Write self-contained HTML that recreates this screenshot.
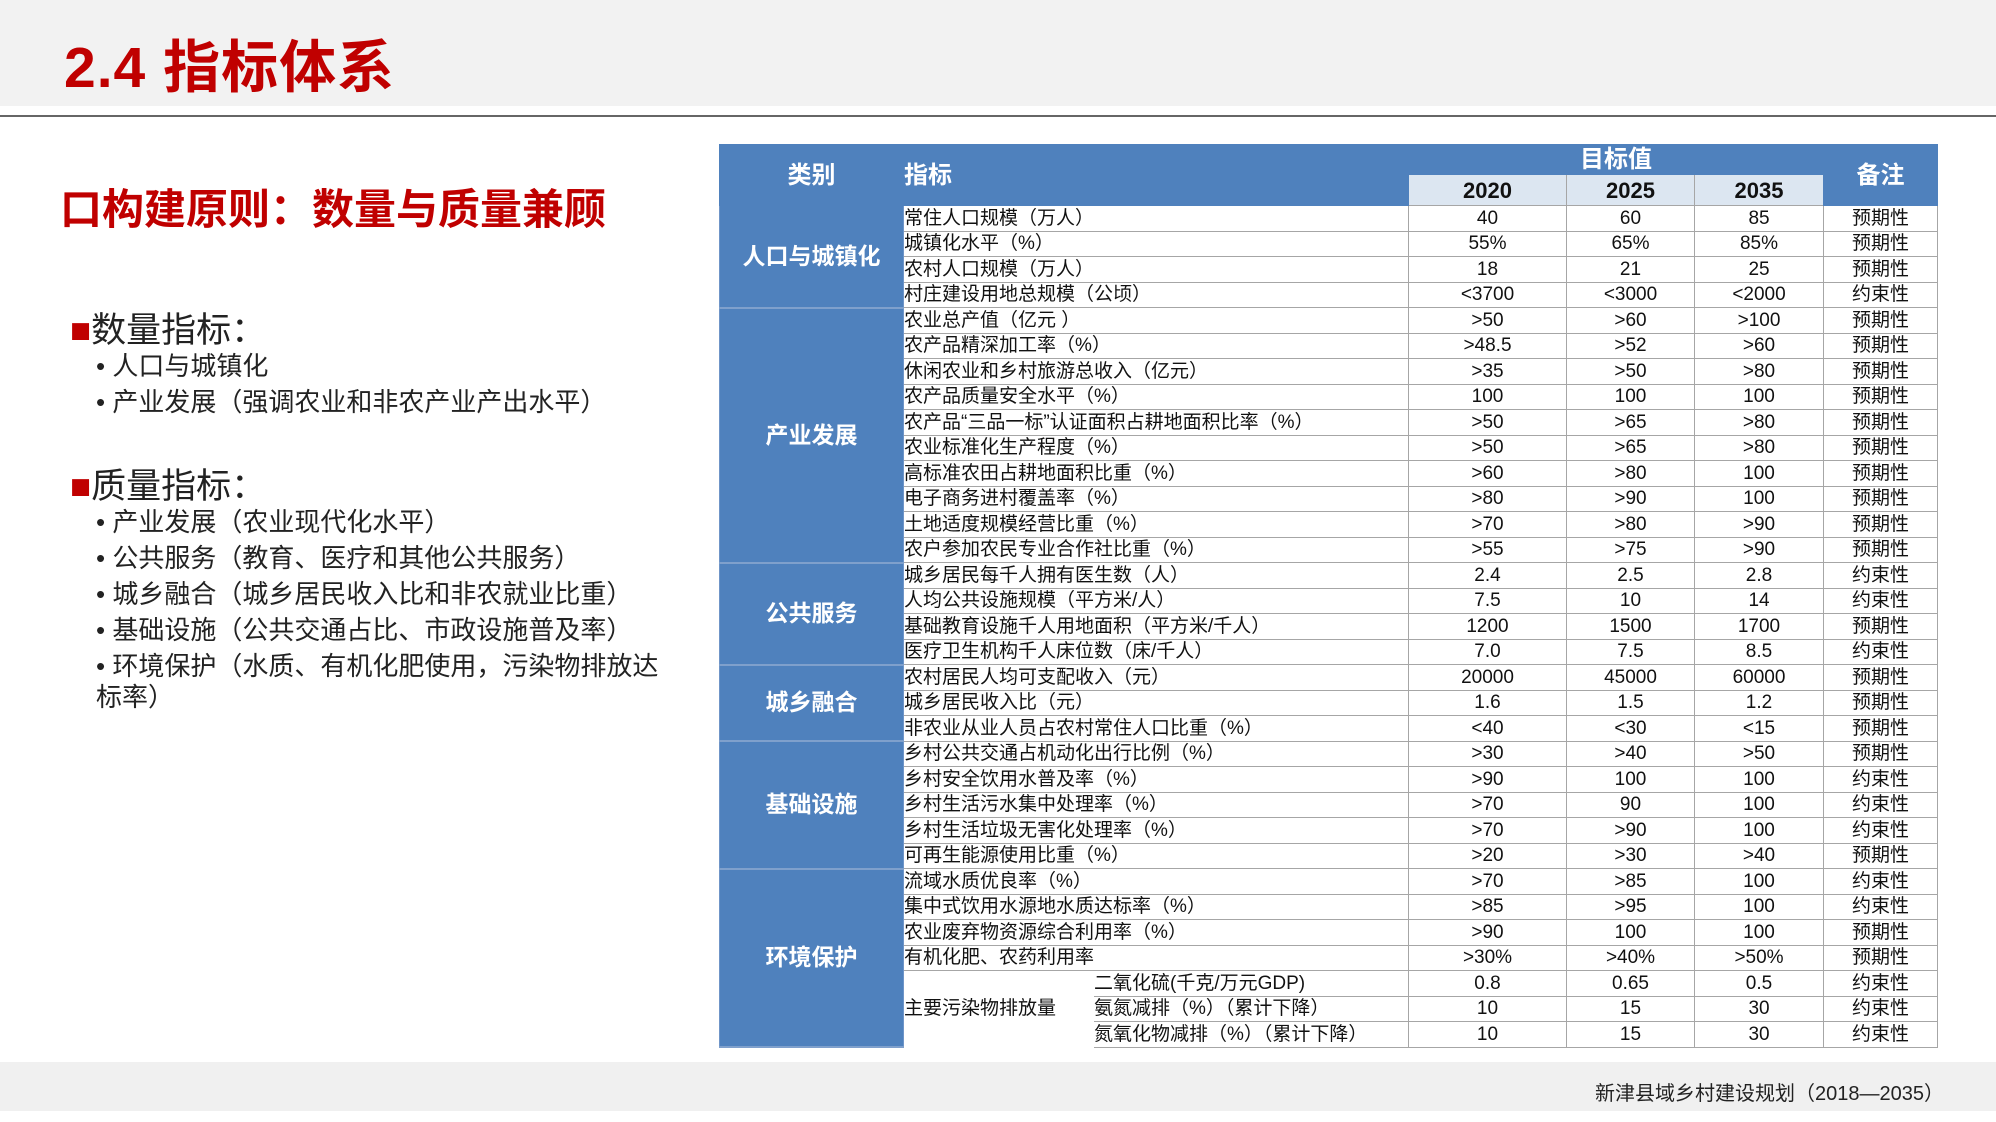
<!DOCTYPE html>
<html><head><meta charset="utf-8"><style>
*{margin:0;padding:0;box-sizing:border-box}
body{width:1996px;height:1122px;background:#fff;position:relative;overflow:hidden;font-family:"Liberation Sans","Noto Sans CJK SC",sans-serif}
.top{position:absolute;left:0;top:0;width:1996px;height:106px;background:#f2f2f2}
.line{position:absolute;left:0;top:115px;width:1996px;height:2px;background:#666}
.title{position:absolute;left:64px;top:22px;font-size:57px;font-weight:bold;color:#c00000;letter-spacing:1px}
.sub{position:absolute;left:60px;top:176px;font-size:42px;font-weight:bold;color:#c00000}
.h2{position:absolute;left:70px;font-size:35px;color:#222}
.h2 b{color:#c00000;font-weight:normal}
.li{position:absolute;left:96px;font-size:26px;color:#222;line-height:31px;width:580px}
table{position:absolute;left:719px;top:144px;width:1218px;border-collapse:collapse;table-layout:fixed;font-size:19px;color:#111}
td{border:1px solid #a6a6a6;height:25.5px;padding:0;white-space:nowrap;overflow:hidden;line-height:23px}
td.c{text-align:center}
.hd{background:#4f81bd;color:#fff;font-weight:bold;font-size:24px;border-color:#4f81bd}
.yr{background:#dce6f1;color:#111;font-weight:bold;font-size:22px;text-align:center;border-color:#a6a6a6}
.cat{background:#4f81bd;color:#fff;font-weight:bold;font-size:23px;text-align:center;border:1px solid #6f95c8;border-bottom:2px solid #7fa0cc}
.foot{position:absolute;left:0;top:1062px;width:1996px;height:49px;background:#f0f0f0}
.ft{position:absolute;right:52px;top:1077px;font-size:20px;color:#222}
</style></head><body>
<div class="top"></div><div class="line"></div>
<div class="title">2.4 指标体系</div>
<div class="sub">口构建原则：数量与质量兼顾</div>
<div class="h2" style="top:302px"><b>■</b>数量指标：</div>
<div class="li" style="top:351px">• 人口与城镇化</div>
<div class="li" style="top:387px">• 产业发展（强调农业和非农产业产出水平）</div>
<div class="h2" style="top:458px"><b>■</b>质量指标：</div>
<div class="li" style="top:507px">• 产业发展（农业现代化水平）</div>
<div class="li" style="top:543px">• 公共服务（教育、医疗和其他公共服务）</div>
<div class="li" style="top:579px">• 城乡融合（城乡居民收入比和非农就业比重）</div>
<div class="li" style="top:615px">• 基础设施（公共交通占比、市政设施普及率）</div>
<div class="li" style="top:651px">• 环境保护（水质、有机化肥使用，污染物排放达标率）</div>
<table>
<colgroup><col style="width:184px"><col style="width:190px"><col style="width:315px"><col style="width:158px"><col style="width:128px"><col style="width:129px"><col style="width:114px"></colgroup>
<tr style="height:30px"><td class="hd c" rowspan="2">类别</td><td class="hd" colspan="2" rowspan="2">指标</td><td class="hd c" colspan="3">目标值</td><td class="hd c" rowspan="2">备注</td></tr>
<tr style="height:31px"><td class="yr">2020</td><td class="yr">2025</td><td class="yr">2035</td></tr>
<tr><td class="cat" rowspan="4">人口与城镇化</td><td colspan="2">常住人口规模（万人）</td><td class="c">40</td><td class="c">60</td><td class="c">85</td><td class="c">预期性</td></tr>
<tr><td colspan="2">城镇化水平（%）</td><td class="c">55%</td><td class="c">65%</td><td class="c">85%</td><td class="c">预期性</td></tr>
<tr><td colspan="2">农村人口规模（万人）</td><td class="c">18</td><td class="c">21</td><td class="c">25</td><td class="c">预期性</td></tr>
<tr><td colspan="2">村庄建设用地总规模（公顷）</td><td class="c">&lt;3700</td><td class="c">&lt;3000</td><td class="c">&lt;2000</td><td class="c">约束性</td></tr>
<tr><td class="cat" rowspan="10">产业发展</td><td colspan="2">农业总产值（亿元 ）</td><td class="c">&gt;50</td><td class="c">&gt;60</td><td class="c">&gt;100</td><td class="c">预期性</td></tr>
<tr><td colspan="2">农产品精深加工率（%）</td><td class="c">&gt;48.5</td><td class="c">&gt;52</td><td class="c">&gt;60</td><td class="c">预期性</td></tr>
<tr><td colspan="2">休闲农业和乡村旅游总收入（亿元）</td><td class="c">&gt;35</td><td class="c">&gt;50</td><td class="c">&gt;80</td><td class="c">预期性</td></tr>
<tr><td colspan="2">农产品质量安全水平（%）</td><td class="c">100</td><td class="c">100</td><td class="c">100</td><td class="c">预期性</td></tr>
<tr><td colspan="2">农产品“三品一标”认证面积占耕地面积比率（%）</td><td class="c">&gt;50</td><td class="c">&gt;65</td><td class="c">&gt;80</td><td class="c">预期性</td></tr>
<tr><td colspan="2">农业标准化生产程度（%）</td><td class="c">&gt;50</td><td class="c">&gt;65</td><td class="c">&gt;80</td><td class="c">预期性</td></tr>
<tr><td colspan="2">高标准农田占耕地面积比重（%）</td><td class="c">&gt;60</td><td class="c">&gt;80</td><td class="c">100</td><td class="c">预期性</td></tr>
<tr><td colspan="2">电子商务进村覆盖率（%）</td><td class="c">&gt;80</td><td class="c">&gt;90</td><td class="c">100</td><td class="c">预期性</td></tr>
<tr><td colspan="2">土地适度规模经营比重（%）</td><td class="c">&gt;70</td><td class="c">&gt;80</td><td class="c">&gt;90</td><td class="c">预期性</td></tr>
<tr><td colspan="2">农户参加农民专业合作社比重（%）</td><td class="c">&gt;55</td><td class="c">&gt;75</td><td class="c">&gt;90</td><td class="c">预期性</td></tr>
<tr><td class="cat" rowspan="4">公共服务</td><td colspan="2">城乡居民每千人拥有医生数（人）</td><td class="c">2.4</td><td class="c">2.5</td><td class="c">2.8</td><td class="c">约束性</td></tr>
<tr><td colspan="2">人均公共设施规模（平方米/人）</td><td class="c">7.5</td><td class="c">10</td><td class="c">14</td><td class="c">约束性</td></tr>
<tr><td colspan="2">基础教育设施千人用地面积（平方米/千人）</td><td class="c">1200</td><td class="c">1500</td><td class="c">1700</td><td class="c">预期性</td></tr>
<tr><td colspan="2">医疗卫生机构千人床位数（床/千人）</td><td class="c">7.0</td><td class="c">7.5</td><td class="c">8.5</td><td class="c">约束性</td></tr>
<tr><td class="cat" rowspan="3">城乡融合</td><td colspan="2">农村居民人均可支配收入（元）</td><td class="c">20000</td><td class="c">45000</td><td class="c">60000</td><td class="c">预期性</td></tr>
<tr><td colspan="2">城乡居民收入比（元）</td><td class="c">1.6</td><td class="c">1.5</td><td class="c">1.2</td><td class="c">预期性</td></tr>
<tr><td colspan="2">非农业从业人员占农村常住人口比重（%）</td><td class="c">&lt;40</td><td class="c">&lt;30</td><td class="c">&lt;15</td><td class="c">预期性</td></tr>
<tr><td class="cat" rowspan="5">基础设施</td><td colspan="2">乡村公共交通占机动化出行比例（%）</td><td class="c">&gt;30</td><td class="c">&gt;40</td><td class="c">&gt;50</td><td class="c">预期性</td></tr>
<tr><td colspan="2">乡村安全饮用水普及率（%）</td><td class="c">&gt;90</td><td class="c">100</td><td class="c">100</td><td class="c">约束性</td></tr>
<tr><td colspan="2">乡村生活污水集中处理率（%）</td><td class="c">&gt;70</td><td class="c">90</td><td class="c">100</td><td class="c">约束性</td></tr>
<tr><td colspan="2">乡村生活垃圾无害化处理率（%）</td><td class="c">&gt;70</td><td class="c">&gt;90</td><td class="c">100</td><td class="c">约束性</td></tr>
<tr><td colspan="2">可再生能源使用比重（%）</td><td class="c">&gt;20</td><td class="c">&gt;30</td><td class="c">&gt;40</td><td class="c">预期性</td></tr>
<tr><td class="cat" rowspan="7">环境保护</td><td colspan="2">流域水质优良率（%）</td><td class="c">&gt;70</td><td class="c">&gt;85</td><td class="c">100</td><td class="c">约束性</td></tr>
<tr><td colspan="2">集中式饮用水源地水质达标率（%）</td><td class="c">&gt;85</td><td class="c">&gt;95</td><td class="c">100</td><td class="c">约束性</td></tr>
<tr><td colspan="2">农业废弃物资源综合利用率（%）</td><td class="c">&gt;90</td><td class="c">100</td><td class="c">100</td><td class="c">预期性</td></tr>
<tr><td colspan="2">有机化肥、农药利用率</td><td class="c">&gt;30%</td><td class="c">&gt;40%</td><td class="c">&gt;50%</td><td class="c">预期性</td></tr>
<tr><td rowspan="3" style="border-color:#fff">主要污染物排放量</td><td>二氧化硫(千克/万元GDP)</td><td class="c">0.8</td><td class="c">0.65</td><td class="c">0.5</td><td class="c">约束性</td></tr>
<tr><td>氨氮减排（%）（累计下降）</td><td class="c">10</td><td class="c">15</td><td class="c">30</td><td class="c">约束性</td></tr>
<tr><td>氮氧化物减排（%）（累计下降）</td><td class="c">10</td><td class="c">15</td><td class="c">30</td><td class="c">约束性</td></tr>
</table>
<div class="foot"></div>
<div class="ft">新津县域乡村建设规划（2018—2035）</div>
</body></html>
